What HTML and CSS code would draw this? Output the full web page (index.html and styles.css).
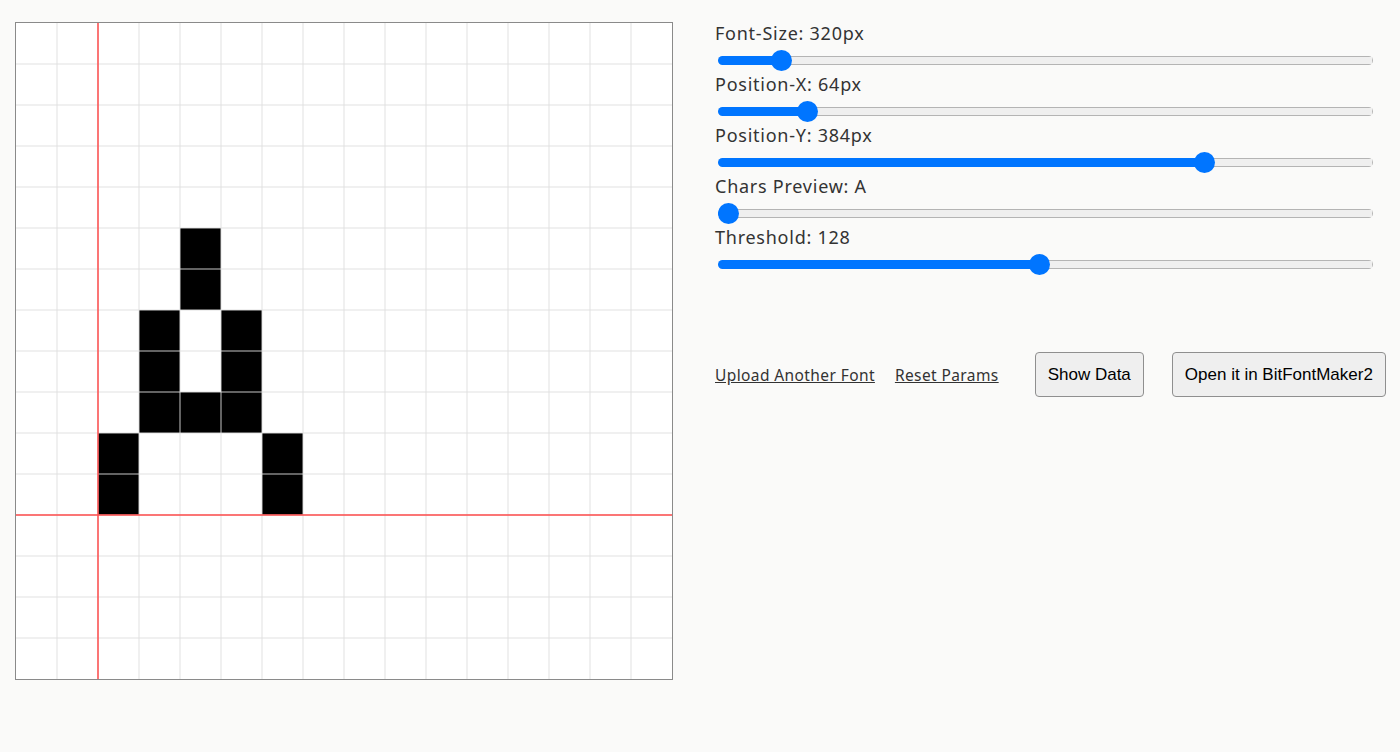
FILE: index.html
```html
<!DOCTYPE html>
<html>
  <head>
    <title>Bit Font Preview</title>
    <link rel="stylesheet" href="styles.css">
  </head>
  <body>
    <div class="app">
      <div class="board">
        <svg class="board-svg" width="656" height="656" viewBox="0 0 656 656">
          <!-- pixels of the glyph -->
          <g class="pixels">
            <rect x="164" y="205" width="41" height="41"/>
            <rect x="164" y="246" width="41" height="41"/>
            <rect x="123" y="287" width="41" height="41"/>
            <rect x="205" y="287" width="41" height="41"/>
            <rect x="123" y="328" width="41" height="41"/>
            <rect x="205" y="328" width="41" height="41"/>
            <rect x="123" y="369" width="41" height="41"/>
            <rect x="164" y="369" width="41" height="41"/>
            <rect x="205" y="369" width="41" height="41"/>
            <rect x="82" y="410" width="41" height="41"/>
            <rect x="246" y="410" width="41" height="41"/>
            <rect x="82" y="451" width="41" height="41"/>
            <rect x="246" y="451" width="41" height="41"/>
          </g>
          <g class="grid" id="grid"></g>
          <line class="guide" x1="82" y1="0" x2="82" y2="656"/>
          <line class="guide" x1="0" y1="492" x2="656" y2="492"/>
        </svg>
      </div>

      <div class="controls">
        <div class="field">
          <label class="field-label">Font-Size: 320px</label>
          <input class="slider" type="range" min="0" max="3840" value="320" style="--fill: 9.67%">
        </div>
        <div class="field">
          <label class="field-label">Position-X: 64px</label>
          <input class="slider" type="range" min="0" max="512" value="64" style="--fill: 13.7%">
        </div>
        <div class="field">
          <label class="field-label">Position-Y: 384px</label>
          <input class="slider" type="range" min="0" max="512" value="384" style="--fill: 74.2%">
        </div>
        <div class="field">
          <label class="field-label">Chars Preview: A</label>
          <input class="slider" type="range" min="0" max="94" value="0" style="--fill: 1.6%">
        </div>
        <div class="field">
          <label class="field-label">Threshold: 128</label>
          <input class="slider" type="range" min="0" max="261" value="128" style="--fill: 49.07%">
        </div>

        <div class="actions">
          <a class="link" href="#">Upload Another Font</a>
          <a class="link" href="#">Reset Params</a>
          <button class="btn">Show Data</button>
          <button class="btn">Open it in BitFontMaker2</button>
        </div>
      </div>
    </div>

    <script>
      // grid lines every 41px
      const grid = document.getElementById('grid');
      let lines = '';
      for (let i = 1; i < 16; i++) {
        const p = i * 41;
        lines += `<line x1="${p}" y1="0" x2="${p}" y2="656"/>`;
        lines += `<line x1="0" y1="${p}" x2="656" y2="${p}"/>`;
      }
      grid.innerHTML = lines;
    </script>
  </body>
</html>
```

FILE: styles.css
```css
html, body {
  margin: 0;
  background-color: #fafaf9;
}

.app {
  display: flex;
  gap: 42px;
  padding: 22px 0 0 15px;
}

.board {
  border: 1px solid #8a8a8a;
  width: 656px;
  height: 656px;
  background-color: white;
  flex: none;
}
.board-svg {
  display: block;
}
.pixels rect {
  fill: black;
}
.grid line {
  stroke: rgba(222, 222, 222, 0.6);
  stroke-width: 1.5;
}
.guide {
  stroke: #ff4d4d;
  stroke-width: 1.5;
}

.controls {
  width: 672px;
  flex: none;
  font-family: "Noto Sans", "Open Sans", sans-serif;
  color: #333;
}

.field {
  display: flex;
  flex-direction: column;
  align-items: flex-start;
}
.field-label {
  font-size: 18px;
  letter-spacing: 0.75px;
  line-height: 23px;
  height: 26px;
}

.slider {
  -webkit-appearance: none;
  appearance: none;
  width: 655px;
  height: 21px;
  margin: 2px 0 2px 3px;
  background: transparent;
}
.slider::-webkit-slider-runnable-track {
  height: 9px;
  border-radius: 5px;
  background:
    linear-gradient(to right, #0075ff var(--fill), transparent var(--fill)),
    linear-gradient(#efefef, #efefef) center / calc(100% - 2px) calc(100% - 2px) no-repeat,
    #b4b4b4;
}
.slider::-webkit-slider-thumb {
  -webkit-appearance: none;
  width: 21px;
  height: 21px;
  margin-top: -6px;
  border-radius: 50%;
  border: none;
  background-color: #0075ff;
}

.actions {
  display: flex;
  align-items: center;
  margin-top: 75px;
  white-space: nowrap;
}
.link {
  flex: none;
  font-size: 15.5px;
  letter-spacing: 0.4px;
  color: #333;
  margin-right: 20px;
}
.btn {
  flex: none;
  height: 45px;
  padding: 0 12px;
  margin-left: 16px;
  margin-right: 12px;
  font-family: "Liberation Sans", Arial, sans-serif;
  font-size: 17px;
  color: black;
  background-color: #efefef;
  border: 1px solid #8f8f8f;
  border-radius: 4px;
  cursor: pointer;
}
```
